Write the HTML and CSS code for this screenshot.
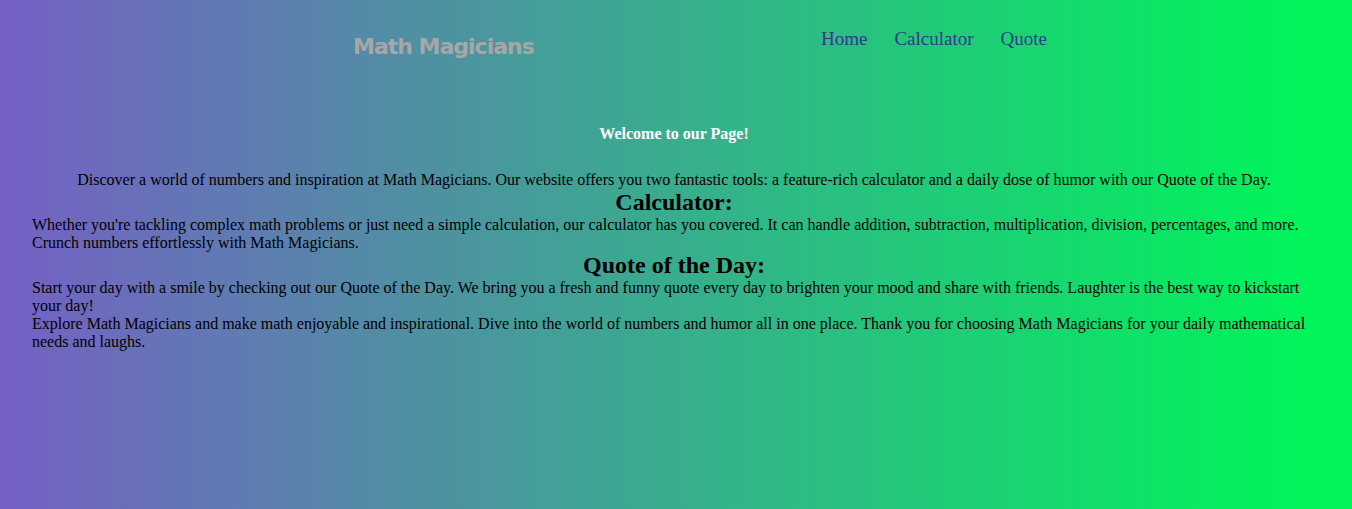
FILE: index.html
```html
<!DOCTYPE html>
<html lang="en">
<head>
<meta charset="utf-8">
<title>Math Magicians</title>
<link rel="stylesheet" href="styles.css">
</head>
<body>
<header class="header">
  <h1 class="logo">Math Magicians</h1>
  <nav class="nav">
    <a class="nav-link" href="#">Home</a>
    <a class="nav-link" href="#">Calculator</a>
    <a class="nav-link" href="#">Quote</a>
  </nav>
</header>
<main class="content">
  <h3 class="welcome">Welcome to our Page!</h3>
  <p class="intro">Discover a world of numbers and inspiration at Math Magicians. Our website offers you two fantastic tools: a feature-rich calculator and a daily dose of humor with our Quote of the Day.</p>
  <h2 class="section-title">Calculator:</h2>
  <p class="text">Whether you're tackling complex math problems or just need a simple calculation, our calculator has you covered. It can handle addition, subtraction, multiplication, division, percentages, and more. Crunch numbers effortlessly with Math Magicians.</p>
  <h2 class="section-title">Quote of the Day:</h2>
  <p class="text">Start your day with a smile by checking out our Quote of the Day. We bring you a fresh and funny quote every day to brighten your mood and share with friends. Laughter is the best way to kickstart your day!</p>
  <p class="text">Explore Math Magicians and make math enjoyable and inspirational. Dive into the world of numbers and humor all in one place. Thank you for choosing Math Magicians for your daily mathematical needs and laughs.</p>
</main>
</body>
</html>
```
FILE: styles.css
```css
html, body {
  margin: 0;
  height: 100%;
}

body {
  background: linear-gradient(to right, #7560c5 0%, #00f45a 96%);
  font-family: "Liberation Serif", "Times New Roman", serif;
  font-size: 16px;
  color: #000;
}

.header {
  display: flex;
  align-items: flex-start;
  padding: 0 0 0 353px;
  height: 96px;
}

.logo {
  margin: 32px 0 0 0;
  font-family: "DejaVu Sans", sans-serif;
  font-weight: bold;
  font-size: 22px;
  line-height: 30px;
  color: #a7a7a7;
  width: 181px;
  white-space: nowrap;
  letter-spacing: -1px;
}

.nav {
  display: flex;
  gap: 27px;
  margin: 27px 0 0 287px;
}

.nav-link {
  font-size: 19px;
  line-height: 24px;
  color: #2c3a85;
  text-decoration: none;
}

.content {
  padding: 29px 36px 0 32px;
}

.welcome {
  margin: 0;
  text-align: center;
  font-size: 16px;
  line-height: 18px;
  color: #fff;
}

.intro {
  margin: 28px 0 0 0;
  text-align: center;
  line-height: 18px;
}

.section-title {
  margin: 0;
  text-align: center;
  font-size: 24px;
  line-height: 27px;
}

.text {
  margin: 0;
  line-height: 18px;
}
```
